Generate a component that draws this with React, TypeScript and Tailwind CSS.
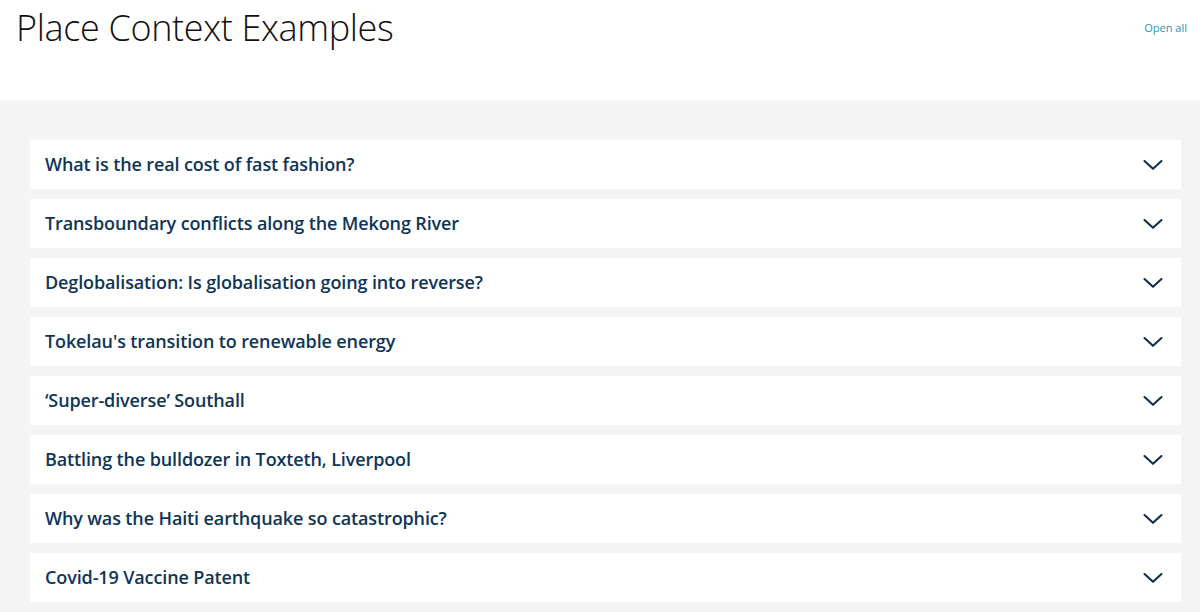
import { useState } from "react";

const topics = [
  "What is the real cost of fast fashion?",
  "Transboundary conflicts along the Mekong River",
  "Deglobalisation: Is globalisation going into reverse?",
  "Tokelau's transition to renewable energy",
  "\u2018Super-diverse\u2019 Southall",
  "Battling the bulldozer in Toxteth, Liverpool",
  "Why was the Haiti earthquake so catastrophic?",
  "Covid-19 Vaccine Patent",
];

function Chevron({ open }: { open: boolean }) {
  return (
    <svg
      width="22"
      height="12"
      viewBox="0 0 22 12"
      fill="none"
      className={open ? "rotate-180" : ""}
    >
      <path d="M2.5 2 L11 9.8 L19.5 2" stroke="#0f2f4f" strokeWidth="2.1" strokeLinecap="round" strokeLinejoin="round" />
    </svg>
  );
}

export default function App() {
  const [open, setOpen] = useState<number[]>([]);

  const toggle = (i: number) =>
    setOpen((prev) => (prev.includes(i) ? prev.filter((x) => x !== i) : [...prev, i]));

  return (
    <main className="min-h-screen bg-[#f4f4f4]" style={{ fontFamily: "'Open Sans', sans-serif" }}>
      <header className="bg-white h-[100px] flex items-start justify-between pl-[16px] pr-[13px]">
        <h1 className="text-[36px] font-light text-[#111] leading-none mt-[10px] tracking-[-0.35px]">
          Place Context Examples
        </h1>
        <button
          className="text-[11px] text-[#2a96b4] mt-[20px]"
          onClick={() => setOpen(open.length ? [] : topics.map((_, i) => i))}
        >
          Open all
        </button>
      </header>

      <section className="pt-[40px] pb-[10px] pl-[30px] pr-[19px] flex flex-col gap-[10px]">
        {topics.map((t, i) => (
          <div key={t} className="bg-white">
            <button
              onClick={() => toggle(i)}
              className="w-full h-[49px] flex items-center justify-between pl-[15px] pr-[17px] text-left"
            >
              <span className="text-[18px] font-semibold text-[#0f3556] tracking-[-0.12px]">{t}</span>
              <Chevron open={open.includes(i)} />
            </button>
          </div>
        ))}
      </section>
    </main>
  );
}
